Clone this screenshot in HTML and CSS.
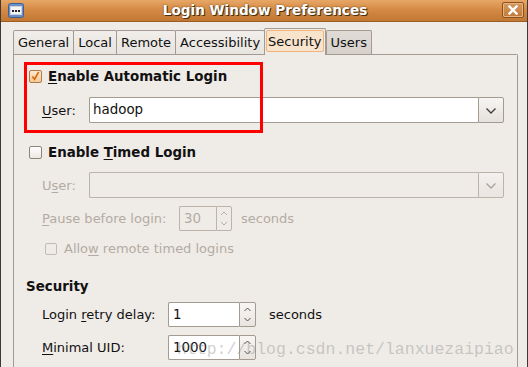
FILE: index.html
```html
<!DOCTYPE html>
<html>
<head>
    <meta charset="utf-8">
    <title>Login Window Preferences</title>
    <link rel="stylesheet" href="styles.css">
</head>
<body>
    <div class="window">
        <div class="titlebar">
            <span class="win-icon">
                <svg viewBox="0 0 16 15" width="16" height="15">
                    <rect x="0.5" y="0.5" width="15" height="14" rx="2" fill="#6d8fc2" stroke="#3f5f94"></rect>
                    <rect x="2.5" y="3.5" width="11" height="8" fill="#f4f4f4" stroke="#c8d4e6"></rect>
                    <rect x="4" y="7" width="2" height="2" fill="#222"></rect>
                    <rect x="7" y="7" width="2" height="2" fill="#222"></rect>
                    <rect x="10" y="7" width="2" height="2" fill="#222"></rect>
                </svg>
            </span>
            <span class="title">Login Window Preferences</span>
            <span class="close-btn">
                <svg viewBox="0 0 10 10" width="10" height="10">
                    <path d="M1.5 1.5 L8.5 8.5 M8.5 1.5 L1.5 8.5" stroke="#fff" stroke-width="2.4" stroke-linecap="square"></path>
                </svg>
            </span>
        </div>
        <div class="content">
            <div class="tabs">
                <div class="tab">General</div>
                <div class="tab">Local</div>
                <div class="tab">Remote</div>
                <div class="tab">Accessibility</div>
                <div class="tab active"><span>Security</span></div>
                <div class="tab dark">Users</div>
            </div>
            <div class="panel">
                <div class="check-row first">
                    <span class="check checked">
                        <svg viewBox="0 0 12 12" width="12" height="12">
                            <path d="M2.5 6.5 L5 9.5 L9.5 1.5" fill="none" stroke="#d46a0c" stroke-width="1.8"></path>
                        </svg>
                    </span>
                    <span class="check-label"><u>E</u>nable Automatic Login</span>
                </div>
                <div class="field-row user-row">
                    <span class="lbl lbl-user"><u>U</u>ser:</span>
                    <div class="combo">
                        <div class="combo-entry">hadoop</div>
                        <div class="combo-btn">
                            <svg viewBox="0 0 10 6" width="10" height="6">
                                <path d="M0.5 0.5 L5 5 L9.5 0.5" fill="none" stroke="#3c3c3c" stroke-width="1.3"></path>
                            </svg>
                        </div>
                    </div>
                </div>

                <div class="check-row timed">
                    <span class="check"></span>
                    <span class="check-label">Enable <u>T</u>imed Login</span>
                </div>
                <div class="field-row disabled user2-row">
                    <span class="lbl lbl-user">U<u>s</u>er:</span>
                    <div class="combo">
                        <div class="combo-entry"></div>
                        <div class="combo-btn">
                            <svg viewBox="0 0 10 6" width="10" height="6">
                                <path d="M0.5 0.5 L5 5 L9.5 0.5" fill="none" stroke="#aaa299" stroke-width="1.3"></path>
                            </svg>
                        </div>
                    </div>
                </div>
                <div class="field-row disabled pause-row">
                    <span class="lbl lbl-pause"><u>P</u>ause before login:</span>
                    <div class="spin small">
                        <div class="spin-entry">30</div>
                        <div class="spin-btns">
                            <svg viewBox="0 0 14 23" width="14" height="23">
                                <path d="M4 8 L7 5 L10 8 M4 15 L7 18 L10 15" fill="none" stroke="#b5ada4" stroke-width="1"></path>
                            </svg>
                        </div>
                    </div>
                    <span class="unit unit-pause">seconds</span>
                </div>
                <div class="allow-row disabled">
                    <span class="check small-check"></span>
                    <span class="allow-label">Allo<u>w</u> remote timed logins</span>
                </div>

                <div class="section-title">Security</div>
                <div class="field-row retry-row">
                    <span class="lbl lbl-sec">Login <u>r</u>etry delay:</span>
                    <div class="spin">
                        <div class="spin-entry">1</div>
                        <div class="spin-btns">
                            <svg viewBox="0 0 15 23" width="15" height="23">
                                <path d="M4.5 8 L7.5 5 L10.5 8 M4.5 15 L7.5 18 L10.5 15" fill="none" stroke="#555" stroke-width="1"></path>
                            </svg>
                        </div>
                    </div>
                    <span class="unit unit-sec">seconds</span>
                </div>
                <div class="field-row uid-row">
                    <span class="lbl lbl-sec"><u>M</u>inimal UID:</span>
                    <div class="spin">
                        <div class="spin-entry">1000</div>
                        <div class="spin-btns">
                            <svg viewBox="0 0 15 23" width="15" height="23">
                                <path d="M4.5 8 L7.5 5 L10.5 8 M4.5 15 L7.5 18 L10.5 15" fill="none" stroke="#555" stroke-width="1"></path>
                            </svg>
                        </div>
                    </div>
                </div>
            </div>
        </div>

        <!-- red annotation drawn over the screenshot -->
        <div class="annotation"></div>
        <div class="watermark">http://blog.csdn.net/lanxuezaipiao</div>
    </div>
</body>
</html>
```
FILE: styles.css
```css
html, body {
    margin: 0;
    padding: 0;
    background: #efebe7;
}
.window {
    position: relative;
    width: 528px;
    height: 367px;
    overflow: hidden;
    box-sizing: border-box;
    border-left: 1px solid #3d3a36;
    border-right: 1px solid #3d3a36;
    background: #efebe7;
    font-family: "DejaVu Sans", sans-serif;
    font-size: 13px;
    color: #111;
}
.titlebar {
    display: flex;
    align-items: center;
    height: 22px;
    box-sizing: border-box;
    padding: 0 3px 1px 7px;
    background: linear-gradient(#e7a766, #d58b45 45%, #c27833);
    border-bottom: 1px solid #9a5e25;
}
.win-icon {
    display: flex;
    width: 16px;
    height: 15px;
}
.title {
    flex: 1;
    text-align: center;
    color: #fff;
    font-weight: bold;
    font-size: 13.6px;
    text-shadow: 1px 1px 0 #4a2e0e, 0 0 2px #6a4215;
    padding-left: 4px;
}
.close-btn {
    display: flex;
    align-items: center;
    justify-content: center;
    width: 20px;
    height: 14px;
    border: 1px solid #8b521d;
    border-radius: 2px;
    background: linear-gradient(#d79a5c, #c07a3b);
    box-shadow: inset 0 0 0 1px #e8b480;
}
.content {
    padding: 8px 9px 0 12px;
}
.tabs {
    display: flex;
    align-items: flex-end;
    height: 24px;
    position: relative;
    z-index: 1;
}
.tab {
    height: 24px;
    box-sizing: border-box;
    padding: 0 4px;
    line-height: 23px;
    border: 1px solid #a39b91;
    border-bottom: none;
    border-radius: 2px 2px 0 0;
    background: linear-gradient(#f1eeeb, #e8e4df);
    margin-right: -1px;
}
.tab.dark {
    background: linear-gradient(#e0dbd6, #d6d1cb);
    margin-left: 1px;
}
.tab.active {
    height: 27px;
    margin-bottom: -1px;
    padding: 1px;
    background: #efebe7;
    line-height: normal;
}
.tab.active span {
    display: block;
    height: 22px;
    line-height: 21px;
    box-sizing: border-box;
    padding: 0 1px;
    border: 1px solid #f2b47a;
    border-radius: 2px;
    background: #f8e3cd;
}
.panel {
    border: 1px solid #a39b91;
    border-bottom: none;
    border-radius: 0 2px 0 0;
    height: 320px;
    padding: 0 13px 0 12px;
}
.check-row {
    display: flex;
    align-items: center;
    height: 16px;
    margin-left: 3px;
}
.check-row.first {
    margin-top: 13px;
}
.check-row.timed {
    margin-top: 21px;
}
.check {
    display: flex;
    align-items: center;
    justify-content: center;
    width: 13px;
    height: 13px;
    box-sizing: border-box;
    border: 1px solid #8d857b;
    border-radius: 2px;
    background: linear-gradient(#ffffff, #ebe7e2);
}
.check.checked {
    border-color: #b07a45;
    background: linear-gradient(#fde9cf, #f4c995);
}
.check-label {
    margin-left: 6px;
    font-weight: bold;
    font-size: 13.4px;
}
.field-row {
    display: flex;
    align-items: center;
    margin-left: 16px;
}
.user-row {
    margin-top: 13px;
}
.user2-row {
    margin-top: 12px;
}
.pause-row {
    margin-top: 8px;
}
.retry-row {
    margin-top: 6px;
}
.uid-row {
    margin-top: 8px;
}
.lbl-user {
    width: 47px;
}
.lbl-pause {
    width: 137px;
}
.lbl-sec {
    width: 126px;
}
.combo {
    flex: 1;
    display: flex;
    height: 26px;
}
.combo-entry {
    flex: 1;
    box-sizing: border-box;
    border: 1px solid #a39b91;
    border-right: none;
    border-radius: 2px 0 0 2px;
    background: #fff;
    padding: 0 3px;
    line-height: 24px;
    font-size: 13.4px;
}
.combo-btn {
    width: 26px;
    box-sizing: border-box;
    display: flex;
    align-items: center;
    justify-content: center;
    padding-top: 1px;
    border: 1px solid #a39b91;
    border-radius: 0 2px 2px 0;
    background: linear-gradient(#f7f5f3, #e5e1dc);
}
.disabled {
    color: #b3aba3;
}
.disabled .combo-entry {
    background: #efebe7;
    border-color: #bcb4aa;
}
.disabled .combo-btn {
    border-color: #bcb4aa;
    background: linear-gradient(#f3f0ed, #e9e5e1);
}
.spin {
    display: flex;
    width: 88px;
    height: 25px;
}
.spin.small {
    width: 53px;
}
.spin-entry {
    flex: 1;
    box-sizing: border-box;
    border: 1px solid #a39b91;
    border-right: none;
    border-radius: 2px 0 0 2px;
    background: #fff;
    padding: 0 4px;
    line-height: 23px;
    font-size: 13.4px;
}
.spin-btns {
    display: flex;
    box-sizing: border-box;
    border: 1px solid #a39b91;
    border-radius: 0 2px 2px 0;
    background: linear-gradient(#f8f6f4, #e8e4e0);
}
.disabled .spin-entry {
    background: #efebe7;
    border-color: #bcb4aa;
}
.disabled .spin-btns {
    border-color: #bcb4aa;
    background: #efebe7;
}
.unit-pause {
    margin-left: 9px;
}
.unit-sec {
    margin-left: 13px;
}
.allow-row {
    display: flex;
    align-items: center;
    height: 15px;
    margin-top: 10px;
    margin-left: 19px;
}
.small-check {
    width: 12px;
    height: 12px;
    border-color: #c3bbb2;
    background: #efebe7;
}
.allow-label {
    margin-left: 7px;
}
.section-title {
    margin-top: 22px;
    height: 18px;
    line-height: 18px;
    font-weight: bold;
    font-size: 13.4px;
}
u {
    text-decoration-thickness: 1px;
    text-underline-offset: 2px;
}
.annotation {
    position: absolute;
    left: 23px;
    top: 62px;
    width: 239px;
    height: 71px;
    box-sizing: border-box;
    border: 3px solid #ff0000;
}
.watermark {
    position: absolute;
    left: 176px;
    top: 341px;
    font-family: "Liberation Mono", monospace;
    font-size: 16.5px;
    line-height: 17px;
    color: rgba(140, 140, 140, 0.42);
    white-space: nowrap;
}
```
